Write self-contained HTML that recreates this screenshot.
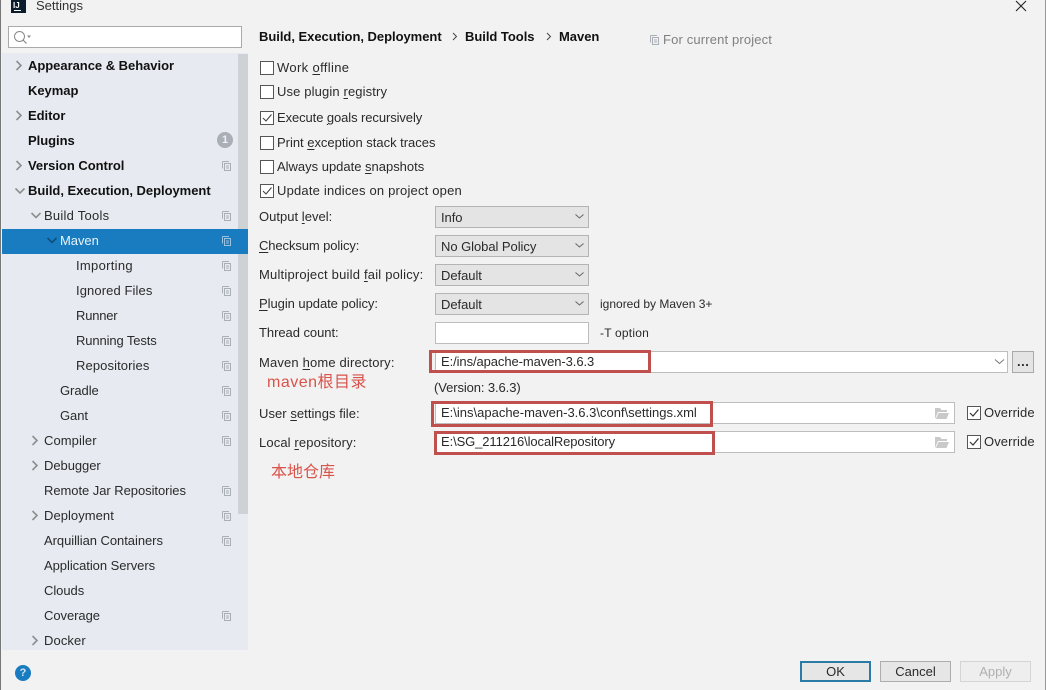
<!DOCTYPE html>
<html><head><meta charset="utf-8">
<style>
html,body{margin:0;padding:0;width:1046px;height:690px;overflow:hidden;background:#f2f2f2}
body{position:relative;font-family:"Liberation Sans","Noto Sans CJK SC",sans-serif;font-size:13px;color:#2a2a2a}
.a{position:absolute}
.t{position:absolute;white-space:nowrap;line-height:18px;height:18px;letter-spacing:-.05px}
.b{font-weight:bold;color:#111;letter-spacing:-.03px}
.w{color:#e8f3fb}
.g{color:#808080}
u{text-underline-offset:2px}
.cb{position:absolute;width:12px;height:12px;border:1px solid #555;background:#fff}
.cb svg{position:absolute;left:0;top:0}
.sel{position:absolute;left:435px;width:152px;height:20px;border:1px solid #b4b4b4;background:#e4e4e4}
.inp{position:absolute;background:#fff;border:1px solid #bdbdbd;box-sizing:border-box}
.red{position:absolute;border:3px solid #c0504d;box-sizing:border-box}
.btn{position:absolute;top:661px;width:71px;height:21px;box-sizing:border-box;border:1px solid #adadad;background:#e6e6e6;text-align:center;line-height:19px}
svg{position:absolute;overflow:visible}
.cn{position:absolute;color:#d9534a;white-space:nowrap;line-height:20px}
</style></head><body>
<div class="a" style="left:0;top:0;width:1px;height:690px;background:#777"></div>
<div class="a" style="left:1045px;top:0;width:1px;height:690px;background:#999"></div>

<div class="a" style="left:11px;top:0;width:15px;height:13px;background:#0b1c2c"></div>
<div class="t" style="left:13px;top:-3px;font-size:8px;font-weight:bold;color:#fff;letter-spacing:0">IJ</div>
<div class="a" style="left:14px;top:10px;width:7px;height:1px;background:#fff"></div>
<div class="t" style="left:36px;top:-3px;letter-spacing:0;color:#333">Settings</div>
<svg style="left:1016px;top:0" width="12" height="12"><path d="M0 1L10 11M10 1L0 11" stroke="#222" stroke-width="1.1" fill="none"/></svg>

<div class="a" style="left:8px;top:26px;width:232px;height:20px;background:#fff;border:1px solid #aaa"></div>
<svg style="left:14px;top:31px" width="18" height="14"><circle cx="5.500" cy="5.500" r="5" fill="none" stroke="#888" stroke-width="1"/><path d="M9 9L12.500 12.500" stroke="#888" stroke-width="1.200"/><path d="M13 4.500H17L15 7Z" fill="#888"/></svg>

<div class="a" style="left:2px;top:53px;width:246px;height:597px;background:#e7ebf1"></div>
<div class="a" style="left:238px;top:54px;width:10px;height:460px;background:#cfd2d5"></div>
<div class="a" style="left:2px;top:229px;width:246px;height:25px;background:#1a7cc0"></div>

<div class="t b" style="left:28px;top:57px">Appearance &amp; Behavior</div>
<div class="t b" style="left:28px;top:82px">Keymap</div>
<div class="t b" style="left:28px;top:107px">Editor</div>
<div class="t b" style="left:28px;top:132px">Plugins</div>
<div class="t b" style="left:28px;top:157px">Version Control</div>
<div class="t b" style="left:28px;top:182px">Build, Execution, Deployment</div>
<div class="t" style="left:44px;top:207px;letter-spacing:.25px">Build Tools</div>
<div class="t w" style="left:60px;top:232px">Maven</div>
<div class="t" style="left:76px;top:257px;letter-spacing:.3px">Importing</div>
<div class="t" style="left:76px;top:282px;letter-spacing:.1px">Ignored Files</div>
<div class="t" style="left:76px;top:307px;letter-spacing:-.2px">Runner</div>
<div class="t" style="left:76px;top:332px;letter-spacing:-.12px">Running Tests</div>
<div class="t" style="left:76px;top:357px;letter-spacing:.1px">Repositories</div>
<div class="t" style="left:60px;top:382px">Gradle</div>
<div class="t" style="left:60px;top:407px">Gant</div>
<div class="t" style="left:44px;top:432px;letter-spacing:.08px">Compiler</div>
<div class="t" style="left:44px;top:457px">Debugger</div>
<div class="t" style="left:44px;top:482px">Remote Jar Repositories</div>
<div class="t" style="left:44px;top:507px;letter-spacing:.05px">Deployment</div>
<div class="t" style="left:44px;top:532px">Arquillian Containers</div>
<div class="t" style="left:44px;top:557px">Application Servers</div>
<div class="t" style="left:44px;top:582px">Clouds</div>
<div class="t" style="left:44px;top:607px">Coverage</div>
<div class="t" style="left:44px;top:632px;letter-spacing:.1px">Docker</div>

<svg style="left:0;top:0;width:1046px;height:690px" width="1046" height="690" fill="none" stroke="#8e8e8e" stroke-width="1.6">
<path d="M16.500 61L21 65.500L16.500 70"/>
<path d="M16.500 111L21 115.500L16.500 120"/>
<path d="M16.500 161L21 165.500L16.500 170"/>
<path d="M15.500 188.500L20 193L24.500 188.500"/>
<path d="M31.500 213L36 217.500L40.500 213"/>
<path d="M47.500 238L52 242.500L56.500 238" stroke="#0d4f80"/>
<path d="M32.500 436L37 440.500L32.500 445"/>
<path d="M32.500 461L37 465.500L32.500 470"/>
<path d="M32.500 511L37 515.500L32.500 520"/>
<path d="M32.500 636L37 640.500L32.500 645"/>
</svg>

<svg style="left:0;top:0;width:1046px;height:690px" width="1046" height="690" fill="none" stroke="#a9afb5" stroke-width="1">
<path d="M222.500 161.500H229M222.500 161.500V168.500M224.500 163.500H230.500V170.500H224.500ZM226 166H229M226 168H229"/>
<path d="M222.500 211.500H229M222.500 211.500V218.500M224.500 213.500H230.500V220.500H224.500ZM226 216H229M226 218H229"/>
<path d="M222.500 236.500H229M222.500 236.500V243.500M224.500 238.500H230.500V245.500H224.500ZM226 241H229M226 243H229" stroke="#9cc3e0"/>
<path d="M222.500 261.500H229M222.500 261.500V268.500M224.500 263.500H230.500V270.500H224.500ZM226 266H229M226 268H229"/>
<path d="M222.500 286.500H229M222.500 286.500V293.500M224.500 288.500H230.500V295.500H224.500ZM226 291H229M226 293H229"/>
<path d="M222.500 311.500H229M222.500 311.500V318.500M224.500 313.500H230.500V320.500H224.500ZM226 316H229M226 318H229"/>
<path d="M222.500 336.500H229M222.500 336.500V343.500M224.500 338.500H230.500V345.500H224.500ZM226 341H229M226 343H229"/>
<path d="M222.500 361.500H229M222.500 361.500V368.500M224.500 363.500H230.500V370.500H224.500ZM226 366H229M226 368H229"/>
<path d="M222.500 386.500H229M222.500 386.500V393.500M224.500 388.500H230.500V395.500H224.500ZM226 391H229M226 393H229"/>
<path d="M222.500 411.500H229M222.500 411.500V418.500M224.500 413.500H230.500V420.500H224.500ZM226 416H229M226 418H229"/>
<path d="M222.500 436.500H229M222.500 436.500V443.500M224.500 438.500H230.500V445.500H224.500ZM226 441H229M226 443H229"/>
<path d="M222.500 486.500H229M222.500 486.500V493.500M224.500 488.500H230.500V495.500H224.500ZM226 491H229M226 493H229"/>
<path d="M222.500 511.500H229M222.500 511.500V518.500M224.500 513.500H230.500V520.500H224.500ZM226 516H229M226 518H229"/>
<path d="M222.500 536.500H229M222.500 536.500V543.500M224.500 538.500H230.500V545.500H224.500ZM226 541H229M226 543H229"/>
<path d="M222.500 611.500H229M222.500 611.500V618.500M224.500 613.500H230.500V620.500H224.500ZM226 616H229M226 618H229"/>
<path d="M650.500 35.500H657M650.500 35.500V42.500M652.500 37.500H658.500V44.500H652.500ZM654 40H657M654 42H657"/>
</svg>

<div class="a" style="left:217px;top:132px;width:16px;height:16px;border-radius:50%;background:#a9afb4;color:#eef;font:bold 11px/16px 'Liberation Sans',sans-serif;text-align:center">1</div>

<div class="t b" style="left:259px;top:28px">Build, Execution, Deployment</div>
<div class="t b" style="left:465px;top:28px">Build Tools</div>
<div class="t b" style="left:559px;top:28px">Maven</div>
<svg style="left:452px;top:32px" width="6" height="9"><path d="M1 1L4.500 4.500L1 8" fill="none" stroke="#444" stroke-width="1"/></svg>
<svg style="left:546px;top:32px" width="6" height="9"><path d="M1 1L4.500 4.500L1 8" fill="none" stroke="#444" stroke-width="1"/></svg>
<div class="t g" style="left:663px;top:31px;letter-spacing:.15px">For current project</div>

<div class="cb" style="left:260px;top:61px"></div>
<div class="t" style="left:277px;top:59px;letter-spacing:.35px">Work <u>o</u>ffline</div>
<div class="cb" style="left:260px;top:85px"></div>
<div class="t" style="left:277px;top:83px;letter-spacing:.13px">Use plugin <u>r</u>egistry</div>
<div class="cb" style="left:260px;top:111px"><svg width="12" height="12"><path d="M2 6L5 9L10.500 2.500" fill="none" stroke="#444" stroke-width="1.100"/></svg></div>
<div class="t" style="left:277px;top:109px;letter-spacing:-.09px">Execute <u>g</u>oals recursively</div>
<div class="cb" style="left:260px;top:136px"></div>
<div class="t" style="left:277px;top:134px;letter-spacing:-.02px">Print <u>e</u>xception stack traces</div>
<div class="cb" style="left:260px;top:160px"></div>
<div class="t" style="left:277px;top:158px;letter-spacing:-.01px">Always update <u>s</u>napshots</div>
<div class="cb" style="left:260px;top:184px"><svg width="12" height="12"><path d="M2 6L5 9L10.500 2.500" fill="none" stroke="#444" stroke-width="1.100"/></svg></div>
<div class="t" style="left:277px;top:182px;letter-spacing:.19px">Update indices on project open</div>

<div class="t" style="left:259px;top:208px;letter-spacing:.02px">Output <u>l</u>evel:</div>
<div class="t" style="left:259px;top:237px;letter-spacing:-.1px"><u>C</u>hecksum policy:</div>
<div class="t" style="left:259px;top:266px;letter-spacing:.2px">Multiproject build <u>f</u>ail policy:</div>
<div class="t" style="left:259px;top:295px">
<u>P</u>lugin update policy:</div>
<div class="t" style="left:259px;top:324px">Thread count:</div>
<div class="t" style="left:259px;top:354px;letter-spacing:.16px">Maven <u>h</u>ome directory:</div>
<div class="t" style="left:259px;top:405px;letter-spacing:.05px">User <u>s</u>ettings file:</div>
<div class="t" style="left:259px;top:434px;letter-spacing:.12px">Local <u>r</u>epository:</div>

<div class="sel" style="top:206px"></div><div class="t" style="left:441px;top:209px">Info</div>
<div class="sel" style="top:235px"></div><div class="t" style="left:441px;top:238px">No Global Policy</div>
<div class="sel" style="top:264px"></div><div class="t" style="left:441px;top:267px">Default</div>
<div class="sel" style="top:293px"></div><div class="t" style="left:441px;top:296px">Default</div>
<svg style="left:0;top:0;width:1046px;height:690px" width="1046" height="690" fill="none" stroke="#666" stroke-width="1">
<path d="M575.500 214.500L579.500 218L583.500 214.500"/>
<path d="M575.500 243.500L579.500 247L583.500 243.500"/>
<path d="M575.500 272.500L579.500 276L583.500 272.500"/>
<path d="M575.500 301.500L579.500 305L583.500 301.500"/>
</svg>
<div class="t" style="left:600px;top:295px;font-size:12px;letter-spacing:0">ignored by Maven 3+</div>
<div class="inp" style="left:435px;top:322px;width:154px;height:22px"></div>
<div class="t" style="left:600px;top:324px;font-size:12px;letter-spacing:.2px">-T option</div>

<div class="inp" style="left:435px;top:351px;width:573px;height:22px"></div>
<svg style="left:994px;top:358px" width="12" height="8"><path d="M1 1.500L5.500 5.500L10 1.500" fill="none" stroke="#777" stroke-width="1"/></svg>
<div class="a" style="left:1012px;top:351px;width:20px;height:20px;border:1px solid #aaa;background:#e4e4e4"></div>
<div class="t" style="left:1017px;top:353px;letter-spacing:.5px;font-weight:bold">...</div>
<div class="t" style="left:441px;top:353px;letter-spacing:-.09px">E:/ins/apache-maven-3.6.3</div>
<div class="t" style="left:434px;top:379px;letter-spacing:-.1px">(Version: 3.6.3)</div>

<div class="inp" style="left:435px;top:402px;width:520px;height:22px"></div>
<div class="t" style="left:441px;top:404px;letter-spacing:0">E:\ins\apache-maven-3.6.3\conf\settings.xml</div>
<div class="inp" style="left:435px;top:431px;width:520px;height:22px"></div>
<div class="t" style="left:441px;top:433px;letter-spacing:-.1px">E:\SG_211216\localRepository</div>

<svg style="left:934px;top:407px" width="16" height="13"><path d="M1 1H6L7.500 3H13V5H4L1 12Z" fill="#c9c9c9"/><path d="M4.500 6H15L12.500 12H1.800Z" fill="#c9c9c9"/></svg>
<svg style="left:934px;top:436px" width="16" height="13"><path d="M1 1H6L7.500 3H13V5H4L1 12Z" fill="#c9c9c9"/><path d="M4.500 6H15L12.500 12H1.800Z" fill="#c9c9c9"/></svg>

<div class="cb" style="left:967px;top:406px"><svg width="12" height="12"><path d="M2 6L5 9L10.500 2.500" fill="none" stroke="#333" stroke-width="1.200"/></svg></div>
<div class="t" style="left:984px;top:404px;letter-spacing:.1px">Override</div>
<div class="cb" style="left:967px;top:435px"><svg width="12" height="12"><path d="M2 6L5 9L10.500 2.500" fill="none" stroke="#333" stroke-width="1.200"/></svg></div>
<div class="t" style="left:984px;top:433px;letter-spacing:.1px">Override</div>

<div class="red" style="left:429px;top:350px;width:222px;height:23px"></div>
<div class="red" style="left:431px;top:401px;width:282px;height:26px"></div>
<div class="red" style="left:434px;top:431px;width:281px;height:24px"></div>
<div class="cn" style="left:267px;top:373px;font-size:16px;letter-spacing:.5px">maven根目录</div>
<div class="cn" style="left:271px;top:463px;font-size:16px">本地仓库</div>

<div class="a" style="left:15px;top:665px;width:16px;height:16px;border-radius:50%;background:#1a7cc0;color:#cfe6f7;font:bold 11px/16px 'Liberation Sans',sans-serif;text-align:center">?</div>

<div class="btn" style="left:800px;border:2px solid #2a7ba5;line-height:17px">OK</div>
<div class="btn" style="left:880px">Cancel</div>
<div class="btn" style="left:960px;background:#eee;border-color:#d4d4d4;color:#b0b0b0">Apply</div>
</body></html>
